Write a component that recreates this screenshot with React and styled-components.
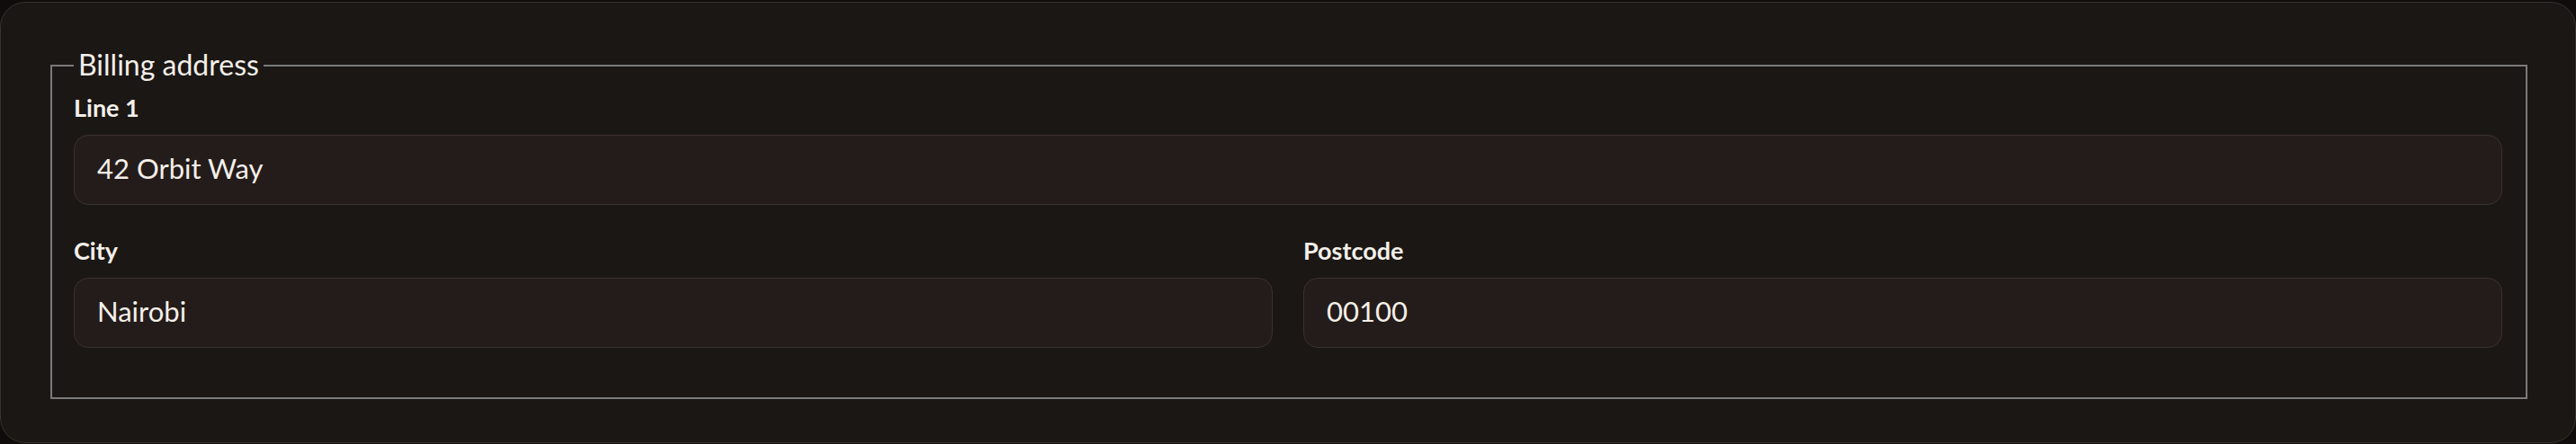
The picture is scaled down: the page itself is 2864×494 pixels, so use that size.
import React from "react";
import styled, { createGlobalStyle } from "styled-components";

const GlobalStyle = createGlobalStyle`
  html, body {
    margin: 0;
    padding: 0;
    background: #0f0c0b;
    font-family: Lato, "Open Sans", "Liberation Sans", sans-serif;
  }
  * { box-sizing: border-box; }
`;

const Page = styled.div`
  padding: 2px 0 1px;
`;

const Card = styled.section`
  background: #1b1714;
  border: 1px solid #3a322e;
  border-radius: 28px;
  padding: 52px 53px 48px 55px;
`;

const Fieldset = styled.fieldset`
  margin: 0;
  min-width: 0;
  border: 2px solid #7a7a7a;
  padding: 14px 26px 55px 24px;
`;

const Legend = styled.legend`
  padding: 2px 5px 3px;
  font-size: 32px;
  line-height: 30px;
  font-weight: 400;
  color: #f4efe9;
`;

const Stack = styled.div`
  display: flex;
  flex-direction: column;
  gap: 35px;
`;

const Row = styled.div`
  display: grid;
  grid-template-columns: repeat(${(p) => p.$cols || 1}, minmax(0, 1fr));
  gap: 34px;
`;

const Field = styled.div`
  display: flex;
  flex-direction: column;
  gap: 14px;
`;

const Label = styled.label`
  display: block;
  font-size: 27px;
  line-height: 32px;
  font-weight: 700;
  color: #f4efe9;
`;

const Input = styled.input`
  display: block;
  width: 100%;
  height: 78px;
  margin: 0;
  border: 1px solid #3b312e;
  border-radius: 16px;
  background: #241c1a;
  color: #f4efe9;
  font-family: inherit;
  font-size: 31px;
  line-height: 36px;
  padding: 16px 25px 20px;
  outline: none;
`;

const fields = [
  [{ id: "line1", label: "Line 1", value: "42 Orbit Way" }],
  [
    { id: "city", label: "City", value: "Nairobi" },
    { id: "postcode", label: "Postcode", value: "00100" },
  ],
];

export default function App() {
  return (
    <>
      <GlobalStyle />
      <Page>
        <Card>
          <Fieldset>
            <Legend>Billing address</Legend>
            <Stack>
              {fields.map((row, i) => (
                <Row key={i} $cols={row.length}>
                  {row.map((f) => (
                    <Field key={f.id}>
                      <Label htmlFor={f.id}>{f.label}</Label>
                      <Input id={f.id} defaultValue={f.value} readOnly />
                    </Field>
                  ))}
                </Row>
              ))}
            </Stack>
          </Fieldset>
        </Card>
      </Page>
    </>
  );
}
